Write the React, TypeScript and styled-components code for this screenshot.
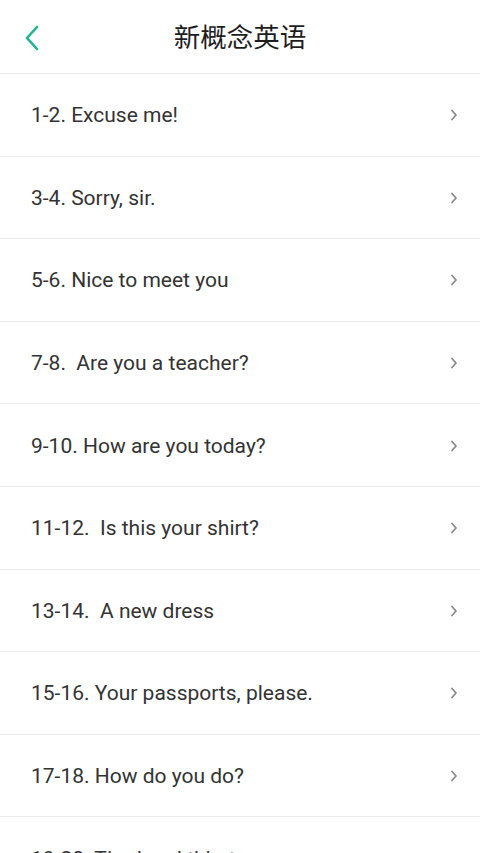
import React from 'react';
import styled, { createGlobalStyle } from 'styled-components';

const lessons = [
  '1-2. Excuse me!',
  '3-4. Sorry, sir.',
  '5-6. Nice to meet you',
  '7-8.  Are you a teacher?',
  '9-10. How are you today?',
  '11-12.  Is this your shirt?',
  '13-14.  A new dress',
  '15-16. Your passports, please.',
  '17-18. How do you do?',
  '19-20. Tired and thirsty',
];

const App: React.FC = () => {
  return (
    <Page>
      <GlobalStyle />
      <Header>
        <BackButton aria-label="back">
          <svg width="16" height="26" viewBox="0 0 16 26" fill="none">
            <path d="M13 2 L3 13 L13 24" stroke="#1db58f" strokeWidth="2.6" strokeLinecap="round" strokeLinejoin="round" />
          </svg>
        </BackButton>
        <Title>新概念英语</Title>
      </Header>
      <List>
        {lessons.map((l) => (
          <Row key={l}>
            <Label>{l}</Label>
            <svg width="8" height="12" viewBox="0 0 8 12" fill="none">
              <path d="M2 1.5 L6 6 L2 10.5" stroke="#8a8a8a" strokeWidth="1.8" strokeLinecap="round" strokeLinejoin="round" />
            </svg>
          </Row>
        ))}
      </List>
    </Page>
  );
};

const GlobalStyle = createGlobalStyle`
  html, body {
    margin: 0;
    padding: 0;
    background: #fff;
  }
  body {
    font-family: Roboto, "Noto Sans CJK SC", sans-serif;
  }
`;

const Page = styled.div`
  width: 480px;
  background: #fff;
`;

const Header = styled.div`
  position: relative;
  height: 73px;
  display: flex;
  align-items: center;
  justify-content: center;
  border-bottom: 1px solid #ececec;
`;

const BackButton = styled.div`
  position: absolute;
  left: 24px;
  top: 25px;
  display: flex;
`;

const Title = styled.div`
  font-family: "Noto Sans CJK SC", sans-serif;
  font-size: 26.5px;
  color: #1e1e1e;
  margin-top: -3px;
`;

const List = styled.div`
  display: flex;
  flex-direction: column;
`;

const Row = styled.div`
  display: flex;
  align-items: center;
  justify-content: space-between;
  padding: 1px 22px 0 31px;
  box-sizing: border-box;
  height: 82.6px;
  border-bottom: 1px solid #ececec;
`;

const Label = styled.span`
  font-size: 21px;
  color: #333;
  white-space: pre;
`;

export default App;
